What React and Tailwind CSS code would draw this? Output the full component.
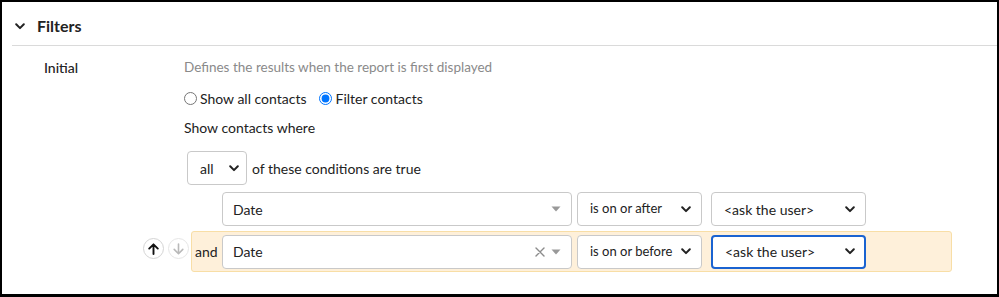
import React from "react";

const Chevron = ({ className = "" }) => (
  <svg width="10" height="7" viewBox="0 0 10 7" className={className}>
    <path d="M1.2 1.3 L5 5.1 L8.8 1.3" fill="none" stroke="#222" strokeWidth="2" strokeLinecap="round" strokeLinejoin="round" />
  </svg>
);

const Caret = () => (
  <svg width="10" height="6" viewBox="0 0 10 6">
    <path d="M0.5 0.5 L9.5 0.5 L5 5.5 Z" fill="#999" />
  </svg>
);

const Clear = () => (
  <svg width="10" height="10" viewBox="0 0 10 10">
    <path d="M1 1 L9 9 M9 1 L1 9" stroke="#8c8c8c" strokeWidth="1.4" strokeLinecap="round" />
  </svg>
);

const FieldSelect = ({ clear }) => (
  <div className="flex items-center w-[350px] h-[34px] border border-[#c9c9c9] rounded-[4px] bg-white pl-[10px] pr-[10px]">
    <span className="flex-1 text-[14px] text-[#222]">Date</span>
    {clear && <span className="mr-[6px] flex items-center"><Clear /></span>}
    <Caret />
  </div>
);

const NativeLikeSelect = ({ text, width, focus, small }) => (
  <div
    className={
      "flex items-center h-[34px] rounded-[4px] bg-white " +
      (focus ? "border-2 border-[#1a63d1] pl-[12px] pr-[9px]" : "border border-[#c9c9c9] pl-[12px] pr-[10px]")
    }
    style={{ width }}
  >
    <span className={"flex-1 text-[#222] whitespace-nowrap " + (small ? "text-[13px]" : "text-[14px]")}>{text}</span>
    <Chevron />
  </div>
);

const ArrowBtn = ({ up }) => (
  <div
    className={
      "w-[21px] h-[21px] rounded-full border flex items-center justify-center " +
      (up ? "border-[#d4d4d4] bg-white" : "border-[#e6e6e6] bg-white")
    }
  >
    <svg width="11" height="12" viewBox="0 0 11 12">
      {up ? (
        <path d="M5.5 11 V1.5 M1.2 5.6 L5.5 1.3 L9.8 5.6" fill="none" stroke="#111" strokeWidth="1.9" strokeLinecap="round" strokeLinejoin="round" />
      ) : (
        <path d="M5.5 1 V10.5 M1.2 6.4 L5.5 10.7 L9.8 6.4" fill="none" stroke="#b9b9b9" strokeWidth="1.6" strokeLinecap="round" strokeLinejoin="round" />
      )}
    </svg>
  </div>
);

export default function App() {
  return (
    <div className="w-[999px] h-[297px] bg-white border-t-2 border-l-2 border-r-2 border-b-[3px] border-black font-['Lato',sans-serif] text-[#222] overflow-hidden">
      {/* header */}
      <div className="ml-[10px] h-[44px] pt-[5px] flex items-center border-b border-[#dadada]">
        <div className="w-[12px] ml-[2px] flex justify-center">
          <Chevron />
        </div>
        <span className="ml-[11px] text-[16px] font-bold text-[#222]">Filters</span>
      </div>

      {/* initial */}
      <div className="flex pt-[11px]">
        <div className="w-[182px] pl-[42px] h-[20px] flex items-center text-[14px] font-medium text-[#222]">Initial</div>
        <div className="flex flex-col">
          <div className="h-[20px] flex items-center text-[13.5px] text-[#8a8a8a]">Defines the results when the report is first displayed</div>
          <div className="h-[20px] mt-[11px] flex items-center text-[14px]">
            <input type="radio" name="f" className="m-0 w-[13px] h-[13px]" />
            <span className="ml-[3px]">Show all contacts</span>
            <input type="radio" name="f" defaultChecked className="m-0 ml-[12px] w-[13px] h-[13px]" />
            <span className="ml-[4px]">Filter contacts</span>
          </div>
          <div className="h-[20px] mt-[9px] flex items-center text-[14px]">Show contacts where</div>
          <div className="mt-[14px] ml-[3px] flex items-center">
            <div className="flex items-center w-[60px] h-[34px] border border-[#c9c9c9] rounded-[4px] pl-[12px] pr-[7px]">
              <span className="flex-1 text-[14px]">all</span>
              <Chevron />
            </div>
            <span className="ml-[5px] text-[14px]">of these conditions are true</span>
          </div>
        </div>
      </div>

      {/* conditions */}
      <div className="mt-[7px] pl-[141px] flex flex-col gap-[4px]">
        <div className="flex">
          <div className="w-[48px]" />
          <div className="flex items-center border border-transparent pl-[2px] h-[35px] pb-[1px]">
            <span className="w-[28px]" />
            <FieldSelect />
            <div className="ml-[5px]"><NativeLikeSelect text="is on or after" width={125} small /></div>
            <div className="ml-[9px]"><NativeLikeSelect text="<ask the user>" width={155} /></div>
          </div>
        </div>
        <div className="flex">
          <div className="w-[48px] flex gap-[4px] pt-[7px]">
            <ArrowBtn up />
            <ArrowBtn />
          </div>
          <div className="flex items-center w-[761px] h-[41px] border border-[#f8dea6] bg-[#fef0da] rounded-[3px] pl-[2px]">
            <span className="w-[28px] text-[14px] pl-[1px]">and</span>
            <FieldSelect clear />
            <div className="ml-[5px]"><NativeLikeSelect text="is on or before" width={125} small /></div>
            <div className="ml-[9px]"><NativeLikeSelect text="<ask the user>" width={155} focus /></div>
          </div>
        </div>
      </div>
    </div>
  );
}
